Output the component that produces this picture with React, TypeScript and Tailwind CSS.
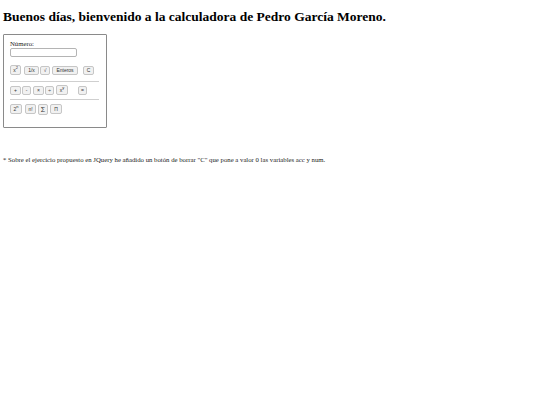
function Btn({ children, w, h = "h-[9px]" }: { children: React.ReactNode; w: string; h?: string }) {
  const cls = "flex items-center justify-center rounded-[2px] border border-[#c6c6c6] bg-[#f1f1f1] font-['Liberation_Sans',sans-serif] text-[5px] leading-none text-[#333333] " + w + " " + h;
  return <div className={cls}>{children}</div>;
}

export default function App() {
  return (
    <div className="h-[405px] w-[540px] overflow-hidden bg-white px-[3px] font-['Liberation_Serif',serif] text-black">
      <h1 className="pt-[9px] text-[13.5px] font-bold leading-[16px] whitespace-nowrap">
        Buenos días, bienvenido a la calculadora de Pedro García Moreno.
      </h1>
      <div className="mt-[9px] h-[94px] w-[104px] rounded-[1px] border border-[#8a8a8a] pl-[6px] pt-[5px]">
        <div className="text-[6.75px] leading-[8px] text-[#222222]">Número:</div>
        <div className="h-[9px] w-[67px] rounded-[2px] border border-[#b4b4b4] bg-white" />
        <div className="mt-[8px] flex items-end">
          <Btn w="w-[11px]" h="h-[10px]">x<sup className="text-[4px]">2</sup></Btn>
          <Btn w="ml-[3px] w-[15px]">1/x</Btn>
          <Btn w="ml-[1px] w-[10px]">√</Btn>
          <Btn w="ml-[2px] w-[26px]">Enteros</Btn>
          <Btn w="ml-[5px] w-[11px]">C</Btn>
        </div>
        <div className="mt-[6px] h-px w-[89px] bg-[#cfcfcf]" />
        <div className="mt-[3px] flex items-end">
          <Btn w="w-[11px]">+</Btn>
          <Btn w="ml-[1px] w-[9px]">-</Btn>
          <Btn w="ml-[2px] w-[11px]">×</Btn>
          <Btn w="ml-[1px] w-[9px]">÷</Btn>
          <Btn w="ml-[2px] w-[12px]" h="h-[10px]">x<sup className="text-[4px]">y</sup></Btn>
          <Btn w="ml-[10px] w-[9px]">=</Btn>
        </div>
        <div className="mt-[4px] h-px w-[89px] bg-[#cfcfcf]" />
        <div className="mt-[4px] flex items-start">
          <Btn w="w-[12px]" h="h-[10px]">2<sup className="text-[4px]">n</sup></Btn>
          <Btn w="ml-[3px] w-[11px]" h="h-[10px]">n!</Btn>
          <Btn w="ml-[2px] w-[10px]" h="h-[11px]"><span className="text-[7px]">Σ</span></Btn>
          <Btn w="ml-[2px] w-[12px]" h="h-[10px]">Π</Btn>
        </div>
      </div>
      <p className="mt-[28px] text-[6.75px] leading-[7px] whitespace-nowrap text-[#222222]">
        * Sobre el ejercicio propuesto en JQuery he añadido un botón de borrar "C" que pone a valor 0 las variables acc y num.
      </p>
    </div>
  );
}
